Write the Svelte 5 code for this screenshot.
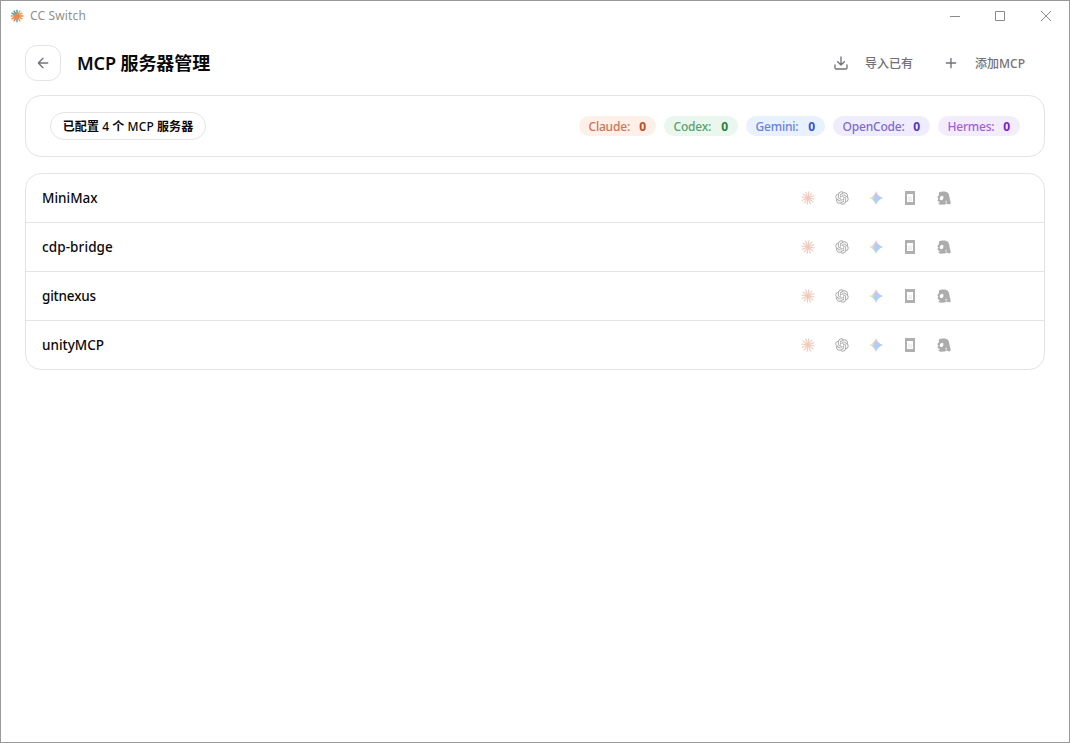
<script>
  const apps = [
    { name: 'Claude', cls: 'claude', width: 77 },
    { name: 'Codex', cls: 'codex', width: 74 },
    { name: 'Gemini', cls: 'gemini', width: 79 },
    { name: 'OpenCode', cls: 'opencode', width: 97 },
    { name: 'Hermes', cls: 'hermes', width: 82 }
  ];
  const servers = ['MiniMax', 'cdp-bridge', 'gitnexus', 'unityMCP'];
  const rays = [0, 30, 60, 90, 120, 150, 180, 210, 240, 270, 300, 330];
  const logoColors = ['#4b9ba2', '#e8a04e', '#e8a04e', '#ee7b45', '#e8a04e', '#e8a04e', '#5b9fae', '#ee7b45', '#ee7b45', '#e89a4b', '#4b9ba2', '#4b9ba2'];
</script>

<div class="window">
  <header class="titlebar">
    <svg class="logo" width="14" height="14" viewBox="0 0 14 14">
      {#each rays as r, i}
        <line x1="7" y1="7" x2="7" y2="0.7" stroke={logoColors[i]} stroke-width="1.5" transform={`rotate(${r} 7 7)`} />
      {/each}
      <circle cx="7" cy="7" r="2.8" fill="#ec854f" />
    </svg>
    <span class="appname">CC Switch</span>
    <div class="controls">
      <svg width="12" height="12" viewBox="0 0 12 12"><path d="M1 6.5h10" /></svg>
      <svg width="12" height="12" viewBox="0 0 12 12"><path d="M1.5 1.5h9v9h-9z" /></svg>
      <svg width="12" height="12" viewBox="0 0 12 12"><path d="M1 1l10 10M11 1L1 11" /></svg>
    </div>
  </header>

  <div class="toolbar">
    <button class="back" aria-label="返回">
      <svg class="stroke" width="16" height="16" viewBox="0 0 24 24"><path d="m12 19-7-7 7-7M19 12H5" /></svg>
    </button>
    <h1>MCP 服务器管理</h1>
    <button class="action import">
      <svg class="stroke" width="16" height="16" viewBox="0 0 24 24"><path d="M21 15v4a2 2 0 0 1-2 2H5a2 2 0 0 1-2-2v-4M7 10l5 5 5-5M12 15V3" /></svg>
      <span>导入已有</span>
    </button>
    <button class="action add">
      <svg class="stroke" width="16" height="16" viewBox="0 0 24 24"><path d="M5 12h14M12 5v14" /></svg>
      <span>添加MCP</span>
    </button>
  </div>

  <section class="summary">
    <span class="total"><b>已配置</b> 4 <b>个</b> MCP <b>服务器</b></span>
    <div class="badges">
      {#each apps as app}
        <span class={`badge ${app.cls}`} style:width={`${app.width}px`}><span>{app.name}:</span><b>0</b></span>
      {/each}
    </div>
  </section>

  <section class="list">
    {#each servers as name, i}
      <div class="row">
        <span class={`name n${i}`}>{name}</span>
        <div class="icons">
          <svg width="14" height="14" viewBox="0 0 14 14" stroke="#d97757" stroke-width="1.1">
            {#each rays as r}
              <line x1="7" y1="7" x2="7" y2="0.3" transform={`rotate(${r + 8} 7 7)`} />
            {/each}
          </svg>
          <svg width="14" height="14" viewBox="-.6 -.6 25.2 25.2" class="openai"><path d="M22.2819 9.8211a5.9847 5.9847 0 0 0-.5157-4.9108 6.0462 6.0462 0 0 0-6.5098-2.9A6.0651 6.0651 0 0 0 4.9807 4.1818a5.9847 5.9847 0 0 0-3.9977 2.9 6.0462 6.0462 0 0 0 .7427 7.0966 5.98 5.98 0 0 0 .511 4.9107 6.051 6.051 0 0 0 6.5146 2.9001A5.9847 5.9847 0 0 0 13.2599 24a6.0557 6.0557 0 0 0 5.7718-4.2058 5.9894 5.9894 0 0 0 3.9977-2.9001 6.0557 6.0557 0 0 0-.7475-7.0729zm-9.022 12.6081a4.4755 4.4755 0 0 1-2.8764-1.0408l.1419-.0804 4.7783-2.7582a.7948.7948 0 0 0 .3927-.6813v-6.7369l2.02 1.1686a.071.071 0 0 1 .038.052v5.5826a4.504 4.504 0 0 1-4.4945 4.4944zm-9.6607-4.1254a4.4708 4.4708 0 0 1-.5346-3.0137l.142.0852 4.783 2.7582a.7712.7712 0 0 0 .7806 0l5.8428-3.3685v2.3324a.0804.0804 0 0 1-.0332.0615L9.74 19.9502a4.4992 4.4992 0 0 1-6.1408-1.6464zM2.3408 7.8956a4.485 4.485 0 0 1 2.3655-1.9728V11.6a.7664.7664 0 0 0 .3879.6765l5.8144 3.3543-2.0201 1.1685a.0757.0757 0 0 1-.071 0l-4.8303-2.7865A4.504 4.504 0 0 1 2.3408 7.872zm16.5963 3.8558L13.1038 8.364 15.1192 7.2a.0757.0757 0 0 1 .071 0l4.8303 2.7913a4.4944 4.4944 0 0 1-.6765 8.1042v-5.6772a.79.79 0 0 0-.407-.667zm2.0107-3.0231l-.142-.0852-4.7735-2.7818a.7759.7759 0 0 0-.7854 0L9.409 9.2297V6.8974a.0662.0662 0 0 1 .0284-.0615l4.8303-2.7866a4.4992 4.4992 0 0 1 6.6802 4.66zM8.3065 12.863l-2.02-1.1638a.0804.0804 0 0 1-.038-.0567V6.0742a4.4992 4.4992 0 0 1 7.3757-3.4537l-.142.0805L8.704 5.459a.7948.7948 0 0 0-.3927.6813zm1.0976-2.3654l2.602-1.4998 2.6069 1.4998v2.9994l-2.5974 1.4997-2.6067-1.4997Z" /></svg>
          <span class="spark"></span>
          <svg width="14" height="14" viewBox="0 0 14 14"><path d="M2 0h10v14H2z" fill="#3c3c3c" /><path d="M4 3h6v8H4z" fill="#fff" /><path d="M5 5.5h4V10H5z" fill="#ddd" /></svg>
          <svg width="14" height="14" viewBox="0 0 14 14" class="hermes-icon"><path fill-rule="evenodd" d="M2 1.500C4.500 0 9.600 0 11.300 2.300C12.600 4.300 12.200 7 13.800 11.800L13 13.500L9 12.500L8 13.500L3 13.800L1 12L3.300 11.200L.5 10L1.300 7.500L.2 6L1.800 4.400ZM3 6L5 4.800L6.500 5.500L6.200 8L4.800 9.200L2.700 8.500ZM8.200 11L9.300 9.300L9.600 12Z" /></svg>
        </div>
      </div>
    {/each}
  </section>
</div>

<style>
  :global(body) { margin: 0; background: #fff; }
  * { box-sizing: border-box; }
  .window {
    width: 1070px; height: 743px; border: 1px solid #999; background: #fff;
    font-family: "Noto Sans", "Noto Sans CJK SC", sans-serif; color: #09090b;
    overflow: hidden;
  }
  button { font: inherit; padding: 0; border: 0; background: none; }
  .titlebar { height: 29px; display: flex; align-items: center; padding-left: 9px; }
  .appname { margin-left: 6px; font-size: 12px; line-height: 18px; color: #8f8f8f; letter-spacing: .15px; }
  .controls { margin-left: auto; display: flex; gap: 33px; padding-right: 17px; }
  .controls svg { fill: none; stroke: #8a8a8a; stroke-width: 1; display: block; }
  .controls svg:nth-child(2) { margin-right: 1px; }
  .toolbar { height: 65px; padding: 0 44px 0 24px; display: flex; align-items: center; }
  .back { width: 36px; height: 36px; border: 1px solid #e4e4e7; border-radius: 12px; display: grid; place-items: center; }
  .stroke { display: block; fill: none; stroke: #71717a; stroke-width: 2; stroke-linecap: round; stroke-linejoin: round; }
  h1 { margin: 0 auto 0 16px; font-size: 18px; line-height: 28px; font-weight: 600; letter-spacing: -.1px; white-space: nowrap; }
  .action { display: flex; align-items: center; gap: 16px; font-size: 12px; font-weight: 500; color: #71717a; line-height: 20px; white-space: nowrap; }
  .action span { padding-top: 2px; }
  .add { margin-left: 30px; }
  .summary { margin: 0 24px; height: 62px; border: 1px solid #e4e4e7; border-radius: 16px; padding: 0 24px; display: flex; align-items: center; justify-content: space-between; }
  .total { width: 156px; height: 28px; border: 1px solid #e4e4e7; border-radius: 14px; font-size: 12px; font-weight: 500; line-height: 28px; letter-spacing: .08px; text-align: center; white-space: nowrap; }
  .total b { font-weight: 700; }
  .badges { display: flex; gap: 8px; }
  .badge { height: 20px; border-radius: 10px; display: flex; justify-content: space-between; padding: 0 10px 0 9.500px; font-size: 12px; line-height: 22px; font-weight: 500; letter-spacing: -.2px; white-space: nowrap; }
  .badge b { font-weight: 700; }
  .claude { background: #fdf0e8; color: #cd7557; } .claude b { color: #bd4a25; }
  .codex { background: #e9f7ef; color: #57a36d; } .codex b { color: #27803b; }
  .gemini { background: #e8f1fe; color: #6c7fe0; } .gemini b { color: #3850cf; }
  .opencode { background: #efedfd; color: #8069d6; } .opencode b { color: #4d35bd; }
  .hermes { background: #f3ecfd; color: #a35fe0; } .hermes b { color: #7420d1; }
  .list { margin: 16px 24px 0; border: 1px solid #e4e4e7; border-radius: 16px; }
  .row { height: 49px; padding: 0 93px 0 16px; display: flex; align-items: center; justify-content: space-between; border-bottom: 1px solid #e4e4e7; }
  .row:last-child { border-bottom: 0; height: 48px; }
  .name { font-size: 13.500px; line-height: 20px; font-weight: 550; }
  .n1 { letter-spacing: .1px; }
  .n2 { letter-spacing: -.2px; }
  .icons { display: flex; gap: 20px; opacity: .4; }
  .icons svg { display: block; }
  .openai { fill: #222; }
  .hermes-icon { fill: #333; }
  .spark {
    width: 14px; height: 14px;
    clip-path: path('M7 0C7.900 3.700 10.300 6.100 14 7C10.300 7.900 7.900 10.300 7 14C6.100 10.300 3.700 7.900 0 7C3.700 6.100 6.100 3.700 7 0Z');
    background:
      radial-gradient(circle at 8.500px 7.500px, #4285f4 25%, transparent 50%),
      conic-gradient(#ee4d5d, #4285f4 20%, #4285f4 42%, #31a862 55%, #6eb94d 68%, #f7bd20 77%, #ee5d4d 95%);
  }
</style>
